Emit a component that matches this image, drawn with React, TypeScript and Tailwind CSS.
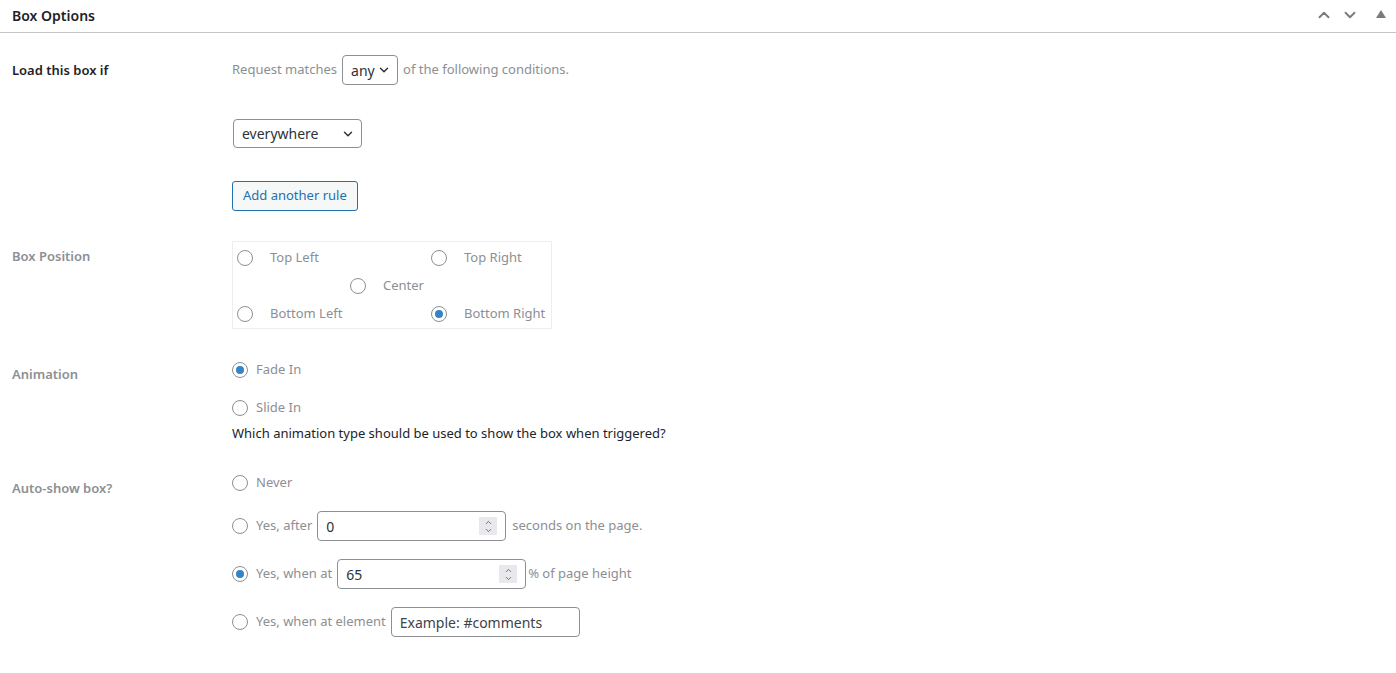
import { ChevronDown, ChevronUp } from 'lucide-react'

function Radio({ checked = false }: { checked?: boolean }) {
  return (
    <span className="w-4 h-4 rounded-full border border-[#8c8f94] bg-white flex items-center justify-center shrink-0">
      {checked && <span className="w-2 h-2 rounded-full bg-[#3582c4]" />}
    </span>
  )
}

function Option({ label, checked = false, gap = 'gap-2' }: { label: string; checked?: boolean; gap?: string }) {
  return (
    <label className={`flex items-center ${gap} text-[#8c8f94]`}>
      <Radio checked={checked} />
      <span>{label}</span>
    </label>
  )
}

function Spinner() {
  return (
    <span className="absolute right-[8px] top-1/2 -translate-y-1/2 w-[18px] h-[18px] bg-[#e9e9ed] flex flex-col items-center justify-center">
      <ChevronUp className="w-[9px] h-[9px] text-[#6b6b6b] -mb-[1px]" strokeWidth={2.5} />
      <ChevronDown className="w-[9px] h-[9px] text-[#6b6b6b]" strokeWidth={2.5} />
    </span>
  )
}

function NumberBox({ value }: { value: string }) {
  return (
    <div className="relative w-[189px] h-[30px] border border-[#8c8f94] rounded-[4px] bg-white flex items-center px-[8px] text-[14px] text-[#2c3338]">
      {value}
      <Spinner />
    </div>
  )
}

export default function App() {
  return (
    <div className="min-h-screen bg-white text-[13px] text-[#3c434a]" style={{ fontFamily: '"Noto Sans", "Open Sans", sans-serif' }}>
      <div className="h-[33px] border-b border-[#c3c4c7] flex items-center justify-between pl-[12px] pr-[8px] pb-[2px]">
        <h2 className="text-[14px] font-semibold text-[#1d2327]">Box Options</h2>
        <div className="flex items-center text-[#787c82]">
          <span className="w-[26px] flex justify-center">
            <ChevronUp className="w-[18px] h-[18px]" strokeWidth={2.5} />
          </span>
          <span className="w-[26px] flex justify-center">
            <ChevronDown className="w-[18px] h-[18px]" strokeWidth={2.5} />
          </span>
          <span className="w-[14px] ml-[11px] flex justify-center">
            <svg width="10" height="8" viewBox="0 0 10 8" className="-mt-[3px]">
              <path d="M5 0 L10 8 L0 8 Z" fill="#787c82" />
            </svg>
          </span>
        </div>
      </div>

      <div className="px-[12px]">
        {/* Load this box if */}
        <div className="flex pt-[22px]">
          <div className="w-[220px] h-[30px] flex items-center pt-[1px] font-semibold text-[#1d2327]">Load this box if</div>
          <div className="flex flex-col">
            <div className="flex items-center h-[30px] gap-[5px] text-[#8c8f94]">
              <span>Request matches</span>
              <div className="w-[56px] h-[30px] border border-[#8c8f94] rounded-[4px] flex items-center justify-between pl-[8px] pr-[6px] text-[14px] text-[#2c3338]">
                any
                <ChevronDown className="w-[14px] h-[14px] text-[#2c3338]" strokeWidth={2.5} />
              </div>
              <span>of the following conditions.</span>
            </div>
            <div className="mt-[34px] ml-[1px] w-[129px] h-[29px] border border-[#8c8f94] rounded-[4px] flex items-center justify-between pl-[8px] pr-[6px] text-[14px] text-[#2c3338]">
              everywhere
              <ChevronDown className="w-[14px] h-[14px] text-[#2c3338]" strokeWidth={2.5} />
            </div>
            <button className="mt-[33px] self-start h-[30px] px-[10px] border border-[#2271b1] rounded-[3px] bg-[#f6f7f7] text-[#2271b1] text-[13px]">
              Add another rule
            </button>
          </div>
        </div>

        {/* Box Position */}
        <div className="flex mt-[30px]">
          <div className="w-[220px] pt-[6px] font-semibold text-[#8c8f94]">Box Position</div>
          <div className="w-[320px] h-[88px] border border-[#eeeeee] pt-[2px] pl-[4px]">
            <div className="grid grid-cols-[194px_auto]">
              <div className="h-[28px] flex items-center"><Option label="Top Left" gap="gap-[17px]" /></div>
              <div className="h-[28px] flex items-center"><Option label="Top Right" gap="gap-[17px]" /></div>
              <div className="col-span-2 h-[28px] flex items-center pl-[113px]"><Option label="Center" gap="gap-[17px]" /></div>
              <div className="h-[28px] flex items-center"><Option label="Bottom Left" gap="gap-[17px]" /></div>
              <div className="h-[28px] flex items-center"><Option label="Bottom Right" checked gap="gap-[17px]" /></div>
            </div>
          </div>
        </div>

        {/* Animation */}
        <div className="flex mt-[29px]">
          <div className="w-[220px] pt-[7px] font-semibold text-[#8c8f94]">Animation</div>
          <div className="flex flex-col">
            <div className="h-[24px] flex items-center"><Option label="Fade In" checked /></div>
            <div className="mt-[14px] h-[24px] flex items-center"><Option label="Slide In" /></div>
            <p className="mt-[4px] h-[18px] leading-[18px] text-[#1d2327]">Which animation type should be used to show the box when triggered?</p>
          </div>
        </div>

        {/* Auto-show box? */}
        <div className="flex mt-[29px]">
          <div className="w-[220px] pt-[8px] font-semibold text-[#8c8f94]">Auto-show box?</div>
          <div className="flex flex-col">
            <div className="h-[24px] flex items-center"><Option label="Never" /></div>
            <div className="mt-[16px] h-[30px] flex items-center">
              <Option label="Yes, after" />
              <div className="ml-[5px]"><NumberBox value="0" /></div>
              <span className="ml-[6px] text-[#8c8f94]">seconds on the page.</span>
            </div>
            <div className="mt-[18px] h-[30px] flex items-center">
              <Option label="Yes, when at" checked />
              <div className="ml-[5px]"><NumberBox value="65" /></div>
              <span className="ml-[2px] text-[#8c8f94]">% of page height</span>
            </div>
            <div className="mt-[18px] h-[30px] flex items-center">
              <Option label="Yes, when at element" />
              <div className="ml-[5px] w-[189px] h-[30px] border border-[#8c8f94] rounded-[4px] flex items-center px-[8px] text-[14px] text-[#3c434a]">
                Example: #comments
              </div>
            </div>
          </div>
        </div>
      </div>
    </div>
  )
}
